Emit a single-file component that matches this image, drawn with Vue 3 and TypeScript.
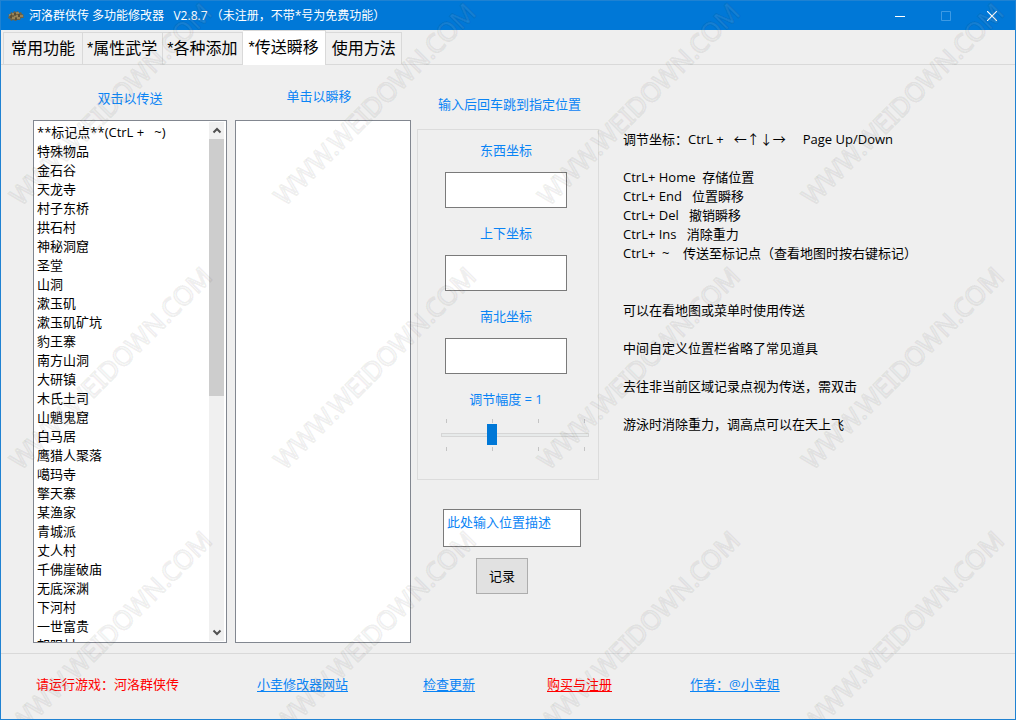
<script setup lang="ts">
import { ref } from 'vue'

const tabs = ['常用功能', '*属性武学', '*各种添加', '*传送瞬移', '使用方法']
const active = ref(3)

const places = [
  '**标记点**(CtrL\u00a0+\u00a0\u00a0\u00a0~)', '特殊物品', '金石谷', '天龙寺', '村子东桥', '拱石村', '神秘洞窟',
  '圣堂', '山洞', '漱玉矶', '漱玉矶矿坑', '豹王寨', '南方山洞', '大研镇', '木氏土司',
  '山魈鬼窟', '白马居', '鹰猎人聚落', '噶玛寺', '擎天寨', '某渔家', '青城派', '丈人村',
  '千佛崖破庙', '无底深渊', '下河村', '一世富贵', '朝阳村',
]
const place = ref<string | null>(null)

const coords = ref([
  { id: 'ew', label: '东西坐标', value: '' },
  { id: 'ud', label: '上下坐标', value: '' },
  { id: 'ns', label: '南北坐标', value: '' },
])
const step = ref(1)
const description = ref('此处输入位置描述')

const notes = [
  '调节坐标：CtrL +   ←↑↓→     Page Up/Down',
  '',
  'CtrL+ Home  存储位置',
  'CtrL+ End   位置瞬移',
  'CtrL+ Del   撤销瞬移',
  'CtrL+ Ins   消除重力',
  'CtrL+  ~    传送至标记点（查看地图时按右键标记）',
  '',
  '',
  '可以在看地图或菜单时使用传送',
  '',
  '中间自定义位置栏省略了常见道具',
  '',
  '去往非当前区域记录点视为传送，需双击',
  '',
  '游泳时消除重力，调高点可以在天上飞',
].join('\n')

const links = [
  { text: '小幸修改器网站', red: false },
  { text: '检查更新', red: false },
  { text: '购买与注册', red: true },
  { text: '作者：@小幸姐', red: false },
]

const marks: { x: number; y: number }[] = []
for (let row = 0; row < 4; row++) {
  for (let col = 0; col < 4; col++) marks.push({ x: 20 + col * 264, y: 206 + row * 264 })
}
</script>

<template>
  <div class="window">
    <header class="titlebar">
      <svg class="logo" width="16" height="12" viewBox="0 0 16 12" aria-hidden="true">
        <path d="M0 4l2 1 1-3 2 1 1-2 2 1 2-1 1 2 2-1 1 2 2 1-1 1 1 2-3 0-1 2-3 0-1 1-3-1-2 1-1-2-2-1 1-2z" fill="#6f6244" />
        <path d="M4 4h2M8 3h3M4 8h3M9 8h3M1 5h2M12 6h3M6 6h4" stroke="#c2a56a" />
        <path d="M3 5v3M7 3v3M11 4v3M8 8v2" stroke="#453d2c" />
      </svg>
      <h1>河洛群侠传 多功能修改器&nbsp;&nbsp; V2.8.7 （未注册，不带*号为免费功能）</h1>
      <div class="controls">
        <button type="button" aria-label="最小化">
          <svg width="10" height="10"><path d="M0 5.500h10" stroke="#fff" /></svg>
        </button>
        <button type="button" aria-label="最大化" disabled>
          <svg width="10" height="10"><path d="M.5.5h9v9h-9z" fill="none" stroke="#3d9ae4" /></svg>
        </button>
        <button type="button" aria-label="关闭">
          <svg width="10" height="10"><path d="M0 0l10 10M10 0L0 10" stroke="#fff" stroke-width="1.200" /></svg>
        </button>
      </div>
    </header>

    <nav class="tabs" role="tablist">
      <button
        v-for="(tab, i) in tabs"
        :key="tab"
        type="button"
        role="tab"
        :aria-selected="active === i"
        :class="{ active: active === i }"
        @click="active = i"
      >{{ tab }}</button>
    </nav>

    <main class="panel">
      <section class="column places">
        <label for="places">双击以传送</label>
        <div class="listbox">
          <select id="places" v-model="place" size="27">
            <option v-for="p in places" :key="p">{{ p }}</option>
          </select>
          <div class="scrollbar" aria-hidden="true">
            <svg width="16" height="17"><path d="M4.500 10.500L8 7l3.500 3.500" fill="none" stroke="#505050" stroke-width="2" /></svg>
            <div class="thumb"></div>
            <svg width="16" height="17"><path d="M4.500 6.500L8 10l3.500-3.500" fill="none" stroke="#505050" stroke-width="2" /></svg>
          </div>
        </div>
      </section>

      <section class="column records">
        <label for="records">单击以瞬移</label>
        <div class="listbox">
          <select id="records" size="27"></select>
        </div>
      </section>

      <section class="column position">
        <h2>输入后回车跳到指定位置</h2>
        <div class="group">
          <div v-for="c in coords" :key="c.id" class="field">
            <label :for="c.id">{{ c.label }}</label>
            <input :id="c.id" v-model="c.value" type="text" />
          </div>
          <label for="step">调节幅度 = {{ step }}</label>
          <div class="slider">
            <div class="ticks"><i v-for="n in 4" :key="n"></i></div>
            <input id="step" v-model.number="step" type="range" min="0" max="3" />
            <div class="ticks"><i v-for="n in 4" :key="n"></i></div>
          </div>
        </div>
        <textarea v-model="description" aria-label="位置描述"></textarea>
        <button type="button" class="record">记录</button>
      </section>

      <section class="notes">{{ notes }}</section>
    </main>

    <footer class="footer">
      <span class="status">请运行游戏：河洛群侠传</span>
      <span v-for="link in links" :key="link.text">
        <a href="#" :class="{ red: link.red }">{{ link.text }}</a>
      </span>
    </footer>

    <svg class="watermark" aria-hidden="true">
      <text
        v-for="m in marks"
        :key="`${m.x}-${m.y}`"
        :transform="`translate(${m.x} ${m.y}) rotate(-45)`"
      >WWW.WEIDOWN.COM</text>
    </svg>
  </div>
</template>

<style>
body {
  margin: 0;
}
</style>

<style scoped>
.window {
  position: relative;
  box-sizing: border-box;
  display: flex;
  flex-direction: column;
  height: 100vh;
  min-height: 640px;
  overflow: hidden;
  border: 1px solid #1f82d2;
  background: #efefef;
  color: #000;
  font: 13px/20px "Open Sans", "Noto Sans CJK SC", sans-serif;
}
button,
input,
textarea,
select {
  box-sizing: border-box;
  margin: 0;
  padding: 0;
  border-radius: 0;
  font: inherit;
  color: inherit;
  outline: none;
}
.titlebar {
  display: flex;
  flex: none;
  align-items: center;
  height: 29px;
  padding-left: 7px;
  background: #0078d7;
  color: #fff;
}
.logo {
  margin-right: 5px;
}
h1 {
  flex: 1;
  margin: 0;
  font-size: 12px;
  font-weight: 400;
  line-height: 18px;
  white-space: nowrap;
}
.controls {
  display: flex;
}
.controls button {
  display: grid;
  place-items: center;
  width: 46px;
  height: 29px;
  border: 0;
  background: none;
}
.tabs {
  display: flex;
  flex: none;
  align-items: flex-end;
  height: 35px;
  padding-left: 2px;
  box-shadow: inset 0 -1px #d9d9d9;
}
.tabs button {
  height: 33px;
  padding: 0 5px 0 4px;
  border: 1px solid #d9d9d9;
  border-left: 0;
  background: #f0f0f0;
  font-family: "Liberation Sans", "Noto Sans CJK SC", sans-serif;
  font-size: 16px;
  white-space: nowrap;
}
.tabs button:first-child {
  padding: 0 7px;
  border-left: 1px solid #d9d9d9;
}
.tabs button:last-child {
  padding: 0 5px 0 6px;
}
.tabs .active {
  height: 35px;
  padding: 0 6px 0 5px;
  border-bottom: 0;
  background: #fff;
}
.panel {
  display: flex;
  flex: 1;
  min-height: 0;
  padding: 0 16px 10px 32px;
  border-bottom: 1px solid #d9d9d9;
}
.column {
  display: flex;
  flex: none;
  flex-direction: column;
}
.column label,
.column h2 {
  margin: 0;
  color: #0a84f5;
  font-size: 13px;
  font-weight: 400;
  line-height: 20px;
  text-align: center;
}
.places {
  width: 194px;
  padding-top: 23px;
}
.places > label {
  margin-bottom: 12px;
}
.records {
  width: 176px;
  margin-left: 8px;
  padding-top: 21px;
}
.records > label {
  margin-bottom: 14px;
  padding-right: 8px;
}
.listbox {
  display: flex;
  flex: 1;
  min-height: 0;
  border: 1px solid #828790;
  background: #fff;
}
select {
  flex: 1;
  min-width: 0;
  height: 100%;
  padding: 1px 0;
  overflow: hidden;
  border: 0;
  background: #fff;
}
option {
  height: 19px;
  min-height: 19px;
  padding: 0 3px;
  line-height: 19px;
}
.scrollbar {
  display: flex;
  flex-direction: column;
  justify-content: space-between;
  width: 15px;
  margin: 1px 2px 1px 0;
  background: #f0f0f0;
}
.scrollbar svg {
  flex: none;
}
.thumb {
  flex: none;
  height: 53%;
  max-height: 257px;
  margin-bottom: auto;
  background: #cdcdcd;
}
.position {
  width: 182px;
  margin-left: 6px;
  padding-top: 29px;
}
.position h2 {
  margin-bottom: 15px;
  padding-left: 3px;
}
.group {
  box-sizing: border-box;
  display: flex;
  flex-direction: column;
  align-items: center;
  height: 351px;
  padding: 10px 4px 0 0;
  border: 1px solid #dcdcdc;
}
.field {
  display: flex;
  flex-direction: column;
  gap: 12px;
  margin-bottom: 15px;
}
.field input {
  width: 122px;
  height: 36px;
  padding: 0 4px;
  border: 1px solid #7a7a7a;
  background: #fff;
}
.slider {
  align-self: flex-end;
  width: 148px;
  margin: 10px 5px 0 0;
}
.ticks {
  display: flex;
  justify-content: space-between;
  padding: 0 4px 0 5px;
}
.ticks i {
  width: 1px;
  height: 4px;
  background: #c4c4c4;
}
input[type="range"] {
  display: block;
  width: 148px;
  height: 24px;
  appearance: none;
  background: none;
}
input[type="range"]::-webkit-slider-runnable-track {
  box-sizing: border-box;
  height: 4px;
  border: 1px solid #d6d6d6;
  background: #e7eaea;
}
input[type="range"]::-webkit-slider-thumb {
  width: 10px;
  height: 21px;
  margin-top: -10px;
  appearance: none;
  background: #0078d7;
}
textarea {
  width: 138px;
  height: 38px;
  margin: 29px 0 0 26px;
  padding: 2px 3px;
  overflow: hidden;
  resize: none;
  border: 1px solid #7a7a7a;
  background: #fff;
  color: #0a84f5;
}
.record {
  width: 52px;
  height: 36px;
  margin: 11px 0 0 59px;
  border: 1px solid #adadad;
  background: #e1e1e1;
}
.notes {
  flex: 1;
  min-width: 0;
  margin-left: 24px;
  padding-top: 65px;
  line-height: 19px;
  white-space: pre-wrap;
}
.footer {
  box-sizing: border-box;
  display: grid;
  flex: none;
  grid-template-columns: 221px 166px 124px 143px 1fr;
  align-items: center;
  height: 65px;
  padding: 0 16px 6px 35px;
  white-space: nowrap;
}
.footer a {
  color: #0a84f5;
  text-underline-offset: 2px;
}
.footer .red,
.status {
  color: #f00;
}
.watermark {
  position: absolute;
  inset: 0;
  width: 100%;
  height: 100%;
  pointer-events: none;
}
.watermark text {
  fill: #fff;
  fill-opacity: 0.1;
  stroke: #000;
  stroke-opacity: 0.06;
  stroke-width: 2px;
  stroke-linejoin: round;
  font: 26px "Noto Sans", sans-serif;
}
</style>
